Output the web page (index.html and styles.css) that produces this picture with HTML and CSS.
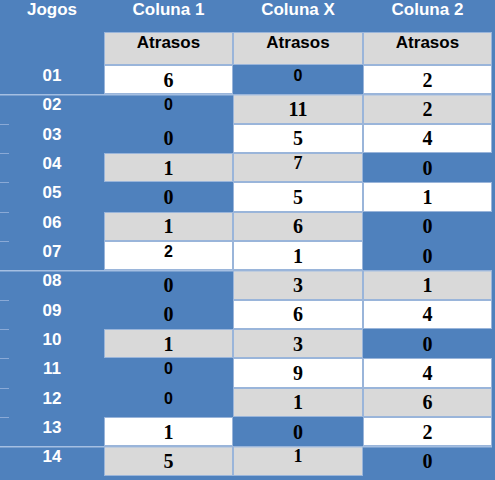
FILE: index.html
```html
<!DOCTYPE html>
<html>
<head>
<meta charset="utf-8">
<link rel="stylesheet" href="styles.css">
</head>
<body>
<div class="tbl">
  <div class="c h">Jogos</div><div class="c h">Coluna 1</div><div class="c h">Coluna X</div><div class="c h">Coluna 2</div>
  <div class="c"></div><div class="c g a">Atrasos</div><div class="c g a">Atrasos</div><div class="c g a">Atrasos</div>

  <div class="c n">01</div><div class="c w v">6</div><div class="c s">0</div><div class="c w v">2</div>
  <div class="c n sep">02</div><div class="c s sep">0</div><div class="c g v sep">11</div><div class="c g v sep">2</div>
  <div class="c n tick">03</div><div class="c v">0</div><div class="c w v">5</div><div class="c w v">4</div>
  <div class="c n tick">04</div><div class="c g v">1</div><div class="c g t">7</div><div class="c v">0</div>
  <div class="c n tick">05</div><div class="c v">0</div><div class="c w v">5</div><div class="c w v">1</div>
  <div class="c n tick">06</div><div class="c g v">1</div><div class="c g v">6</div><div class="c v">0</div>
  <div class="c n tick">07</div><div class="c w s">2</div><div class="c w v">1</div><div class="c v">0</div>
  <div class="c n sep">08</div><div class="c v sep">0</div><div class="c g v sep">3</div><div class="c g v sep">1</div>
  <div class="c n tick">09</div><div class="c v">0</div><div class="c w v">6</div><div class="c w v">4</div>
  <div class="c n tick">10</div><div class="c g v">1</div><div class="c g v">3</div><div class="c v">0</div>
  <div class="c n tick">11</div><div class="c s">0</div><div class="c w v">9</div><div class="c w v">4</div>
  <div class="c n tick">12</div><div class="c s">0</div><div class="c g v">1</div><div class="c g v">6</div>
  <div class="c n tick">13</div><div class="c w v">1</div><div class="c v">0</div><div class="c w v">2</div>
  <div class="c n sep">14</div><div class="c g v sep">5</div><div class="c g t sep">1</div><div class="c v sep">0</div>
</div>
</body>
</html>
```
FILE: styles.css
```css
html, body {
  margin: 0;
  padding: 0;
  background: #4f81bd;
}
body {
  width: 495px;
  height: 480px;
  overflow: hidden;
}
.tbl {
  display: grid;
  grid-template-columns: 104px 129px 130px 129px;
  grid-template-rows: 32px 33px repeat(14, 29.357px);
  width: 492px;
}
.c {
  display: flex;
  justify-content: center;
  align-items: flex-start;
  box-sizing: border-box;
  background: #4f81bd;
  color: #000;
}
.g {
  background: #d9d9d9;
  box-shadow: inset 0 0 0 1px #9ab5da;
}
.w {
  background: #ffffff;
  box-shadow: inset 0 0 0 1px #9ab5da;
}
.h {
  font: bold 17px/20px "Liberation Sans", Arial, sans-serif;
  color: #fff;
  padding-top: 0;
}
.a {
  font: bold 17px/20px "Liberation Sans", Arial, sans-serif;
  padding-top: 1px;
}
.n {
  font: bold 17px/20px "Liberation Sans", Arial, sans-serif;
  color: #fff;
  padding-top: 1px;
}
.tick {
  background: linear-gradient(#8aa9d6, #8aa9d6) no-repeat 0 0 / 9px 1px, #4f81bd;
}
.v {
  font: bold 20px/22px "Liberation Serif", "Times New Roman", serif;
  align-items: center;
}
.s {
  font: bold 16px/18px "Liberation Sans", Arial, sans-serif;
  padding-top: 2px;
}
.t {
  font: bold 18px/19px "Liberation Serif", "Times New Roman", serif;
  padding-top: 1px;
}
.sep {
  box-shadow: inset 0 1.5px 0 #a5bfe2;
}
.g.sep, .w.sep {
  box-shadow: inset 0 0 0 1px #9ab5da, inset 0 1.5px 0 #a5bfe2;
}
```
